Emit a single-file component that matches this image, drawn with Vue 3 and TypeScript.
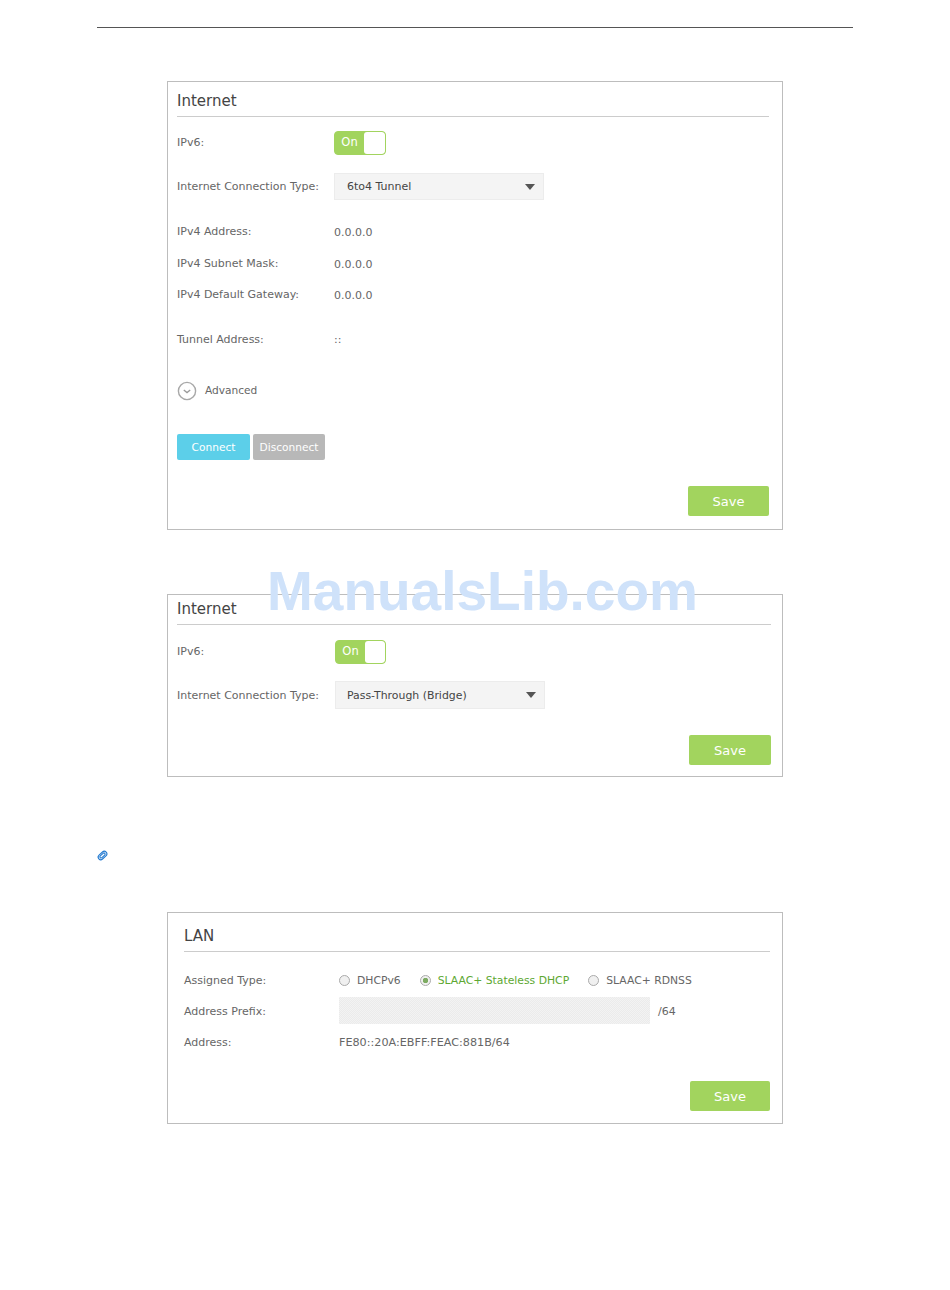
<template>
  <div class="page">
    <div class="top-rule" />

    <!-- 6to4 -->
    <section class="card card-tunnel">
      <h3 class="card-title">Internet</h3>
      <div class="row row-ipv6">
        <span class="label">IPv6:</span>
        <div class="toggle"><span class="toggle-on">On</span><span class="toggle-knob" /></div>
      </div>
      <div class="row row-type">
        <span class="label">Internet Connection Type:</span>
        <div class="select"><span>6to4 Tunnel</span><i class="caret" /></div>
      </div>
      <div class="info-list">
        <div v-for="item in ipv4Rows" :key="item.label" class="row info-row">
          <span class="label">{{ item.label }}</span>
          <span class="value">{{ item.value }}</span>
        </div>
      </div>
      <div class="row tunnel-row">
        <span class="label">Tunnel Address:</span>
        <span class="value">::</span>
      </div>
      <div class="advanced">
        <svg width="20" height="20" viewBox="0 0 20 20" fill="none">
          <circle cx="10" cy="10" r="8.6" stroke="#a8a8a8" stroke-width="1.4" />
          <path d="M6.8 9 10 11.6 13.2 9" stroke="#9a9a9a" stroke-width="1.3" />
        </svg>
        <span class="advanced-text">Advanced</span>
      </div>
      <div class="actions">
        <button class="btn btn-connect">Connect</button>
        <button class="btn btn-disconnect">Disconnect</button>
      </div>
      <div class="save-bar"><button class="save">Save</button></div>
    </section>

    <!-- Pass-Through -->
    <section class="card card-bridge">
      <h3 class="card-title">Internet</h3>
      <div class="row row-ipv6">
        <span class="label">IPv6:</span>
        <div class="toggle"><span class="toggle-on">On</span><span class="toggle-knob" /></div>
      </div>
      <div class="row row-type">
        <span class="label">Internet Connection Type:</span>
        <div class="select"><span>Pass-Through (Bridge)</span><i class="caret" /></div>
      </div>
      <div class="save-bar"><button class="save">Save</button></div>
    </section>

    <div class="note-icon">
      <svg width="11" height="11" viewBox="0 0 11 11" fill="none">
        <g transform="rotate(-42 5.500 5.500)" stroke="#1f78d0" stroke-width="1.100">
          <rect x="0.600" y="2.900" width="9.800" height="5.200" rx="2.600" />
          <rect x="2.400" y="4.300" width="6.200" height="2.400" rx="1.200" />
        </g>
      </svg>
    </div>

    <!-- LAN -->
    <section class="card card-lan">
      <h3 class="card-title">LAN</h3>
      <div class="lan-row lan-first">
        <span class="label">Assigned Type:</span>
        <div class="radios">
          <label v-for="opt in assignedTypes" :key="opt.name" class="radio" :class="{ checked: opt.checked }">
            <i class="radio-dot" />{{ opt.name }}
          </label>
        </div>
      </div>
      <div class="lan-row">
        <span class="label">Address Prefix:</span>
        <div class="prefix-input" />
        <span class="prefix-len">/64</span>
      </div>
      <div class="lan-row">
        <span class="label">Address:</span>
        <span class="value lan-address">FE80::20A:EBFF:FEAC:881B/64</span>
      </div>
      <div class="save-bar"><button class="save">Save</button></div>
    </section>

    <div class="watermark">ManualsLib.com</div>
  </div>
</template>

<script setup lang="ts">
interface InfoRow {
  label: string
  value: string
}

const ipv4Rows: InfoRow[] = [
  { label: 'IPv4 Address:', value: '0.0.0.0' },
  { label: 'IPv4 Subnet Mask:', value: '0.0.0.0' },
  { label: 'IPv4 Default Gateway:', value: '0.0.0.0' },
]

const assignedTypes = [
  { name: 'DHCPv6', checked: false },
  { name: 'SLAAC+ Stateless DHCP', checked: true },
  { name: 'SLAAC+ RDNSS', checked: false },
]
</script>

<style>
html,
body {
  margin: 0;
  background: #fff;
}
</style>

<style scoped>
.page {
  position: relative;
  width: 950px;
  height: 1290px;
  padding-top: 27px;
  box-sizing: border-box;
  font-family: "DejaVu Sans", "Liberation Sans", sans-serif;
  font-size: 11px;
  color: #666;
  overflow: hidden;
}

.top-rule {
  height: 1px;
  margin: 0 97px;
  background: #555;
}

/* cards */
.card {
  width: 616px;
  margin-left: 167px;
  border: 1px solid #bdbdbd;
  box-sizing: border-box;
  padding: 0 13px 0 9px;
}

.card-tunnel {
  height: 449px;
  margin-top: 53px;
}

.card-bridge {
  height: 183px;
  margin-top: 64px;
  padding-right: 11px;
}

.card-lan {
  height: 212px;
  margin-top: 51px;
  padding: 0 12px 0 16px;
}

.card-title {
  height: 34px;
  margin: 0;
  border-bottom: 1px solid #ccc;
  font-size: 15px;
  font-weight: 400;
  line-height: 39px;
  color: #444;
}

.card-bridge .card-title {
  height: 29px;
  line-height: 29px;
}

.card-lan .card-title {
  height: 38px;
  line-height: 46px;
}

.row {
  display: flex;
  align-items: center;
}

.label {
  flex: 0 0 157px;
}

.card-bridge .label {
  flex-basis: 158px;
}

.row-ipv6 {
  height: 24px;
  margin-top: 14px;
}

.row-ipv6 .label {
  margin-top: -2px;
}

.card-bridge .row-ipv6 {
  margin-top: 15px;
}

.row-type {
  height: 27px;
  margin-top: 18px;
}

.card-bridge .row-type {
  height: 28px;
  margin-top: 17px;
}

.toggle {
  display: flex;
  width: 52px;
  height: 24px;
  border: 1px solid #a2d45e;
  border-radius: 4px;
  box-sizing: border-box;
  background: #a2d45e;
  overflow: hidden;
}

.card-bridge .toggle {
  width: 51px;
}

.toggle-on {
  width: 29px;
  color: #fff;
  font-size: 11.500px;
  line-height: 21px;
  text-align: center;
}

.toggle-knob {
  flex: 1;
  border-radius: 3px;
  background: #fff;
}

.select {
  display: flex;
  align-items: center;
  justify-content: space-between;
  width: 210px;
  height: 100%;
  padding: 0 4px 0 12px;
  border: 1px solid #ececec;
  box-sizing: border-box;
  background: #f4f4f4;
  color: #444;
}

.card-bridge .select {
  padding-left: 11px;
  font-size: 10.900px;
}

.caret {
  width: 0;
  height: 0;
  margin-right: 4px;
  border-left: 5px solid transparent;
  border-right: 5px solid transparent;
  border-top: 6px solid #555;
}

.info-list {
  display: flex;
  flex-direction: column;
  margin-top: 16px;
}

.info-row {
  height: 31.5px;
}

.info-row .value {
  padding-top: 2px;
}

.tunnel-row {
  height: 32px;
  margin-top: 13px;
}

.advanced {
  display: flex;
  align-items: center;
  gap: 8px;
  height: 22px;
  margin-top: 24px;
  font-size: 10.600px;
  color: #666;
}

.advanced-text {
  margin-top: -2px;
}

.actions {
  display: flex;
  gap: 3px;
  margin-top: 32px;
}

.btn {
  height: 26px;
  border: 0;
  border-radius: 2px;
  padding: 0;
  color: #fff;
  font: inherit;
  font-size: 10.600px;
}

.btn-connect {
  width: 73px;
  background: #5ccfe9;
}

.btn-disconnect {
  width: 72px;
  background: #b8b8b8;
}

.save-bar {
  display: flex;
  justify-content: flex-end;
  margin-top: 26px;
}

.save {
  width: 81px;
  height: 30px;
  border: 0;
  border-radius: 2px;
  background: #a2d45e;
  color: #fff;
  font: inherit;
  font-size: 13px;
}

.card-tunnel .save {
  padding-top: 2px;
}

.card-bridge .save {
  width: 82px;
}

.card-lan .save {
  width: 80px;
}

.note-icon {
  height: 11px;
  margin: 73px 0 0 97px;
}

.note-icon svg {
  display: block;
}

/* LAN */
.lan-row {
  display: flex;
  align-items: center;
  height: 26px;
  margin-top: 5px;
}

.lan-first {
  margin-top: 15px;
}

.lan-row .label {
  flex: 0 0 155px;
}

.radios {
  display: flex;
  gap: 19px;
}

.radio {
  display: flex;
  align-items: center;
  gap: 7px;
  font-size: 10.800px;
}

.radio-dot {
  width: 11px;
  height: 11px;
  border: 1px solid #aaa;
  border-radius: 50%;
  box-sizing: border-box;
  background: #f0f0f0;
}

.radio.checked {
  color: #5da832;
}

.radio.checked .radio-dot {
  background: radial-gradient(circle, #7dab62 0 2.500px, #f0f0f0 3px);
}

.prefix-input {
  align-self: flex-start;
  width: 311px;
  height: 27px;
  margin-top: -1px;
  background: repeating-conic-gradient(#ebebeb 0 25%, #f3f3f3 0 50%) 0 0 / 2px 2px;
}

.prefix-len {
  margin-left: 8px;
}

.lan-address {
  font-size: 11.200px;
}

/* watermark over the page */
.watermark {
  position: absolute;
  left: 267px;
  top: 560px;
  font-family: "Liberation Sans", Arial, sans-serif;
  font-size: 55px;
  font-weight: 700;
  line-height: 62px;
  color: #cfe2fa;
  white-space: nowrap;
}
</style>
